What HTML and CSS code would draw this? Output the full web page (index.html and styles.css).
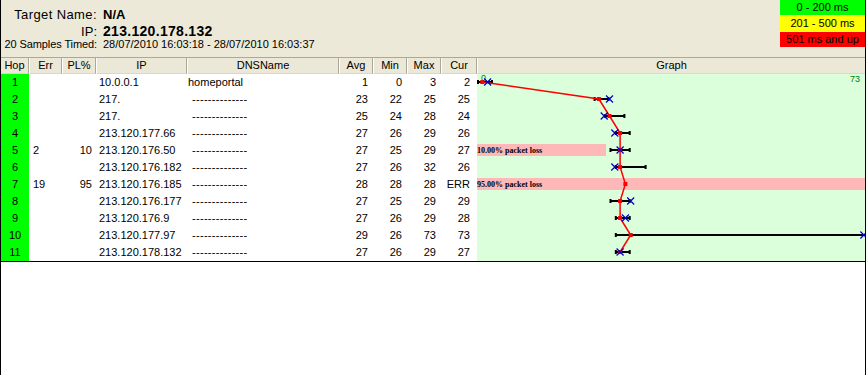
FILE: index.html
```html
<!DOCTYPE html>
<html>
<head>
<meta charset="utf-8">
<link rel="stylesheet" href="styles.css">
</head>
<body>
<div class="window">
  <div class="top">
    <div class="info">
      <div class="line l1"><span class="label wide">Target Name:</span><span class="val bold13">N/A</span></div>
      <div class="line l2"><span class="label">IP:</span><span class="val bold14">213.120.178.132</span></div>
      <div class="line l3"><span class="label small">20 Samples Timed:</span><span class="val small">28/07/2010 16:03:18 - 28/07/2010 16:03:37</span></div>
    </div>
    <div class="legend">
      <div class="lg green">0 - 200 ms</div>
      <div class="lg yellow">201 - 500 ms</div>
      <div class="lg red">501 ms and up</div>
    </div>
  </div>
  <div class="list">
    <div class="th">Hop</div><div class="th">Err</div><div class="th">PL%</div><div class="th">IP</div><div class="th">DNSName</div><div class="th">Avg</div><div class="th">Min</div><div class="th">Max</div><div class="th">Cur</div><div class="th last">Graph</div>

    <div class="graph">
      <svg width="388" height="187" viewBox="0 0 388 187">
        <rect x="0" y="0" width="388" height="187" fill="#dbffdb"/>
        <rect x="0" y="70" width="129" height="12" fill="#ffb8b8"/>
        <rect x="0" y="104" width="388" height="12" fill="#ffb8b8"/>
        <text x="0" y="79" class="pl">10.00% packet loss</text>
        <text x="0" y="113" class="pl">95.00% packet loss</text>
        <text x="4" y="7" class="scale">0</text>
        <text x="383" y="8" class="scale" text-anchor="end">73</text>
        <g stroke="#000" stroke-width="2" fill="none">
          <path d="M0 8H15.9M1 6V10M15 6V10"/>
          <path d="M116.6 25H132.5M117.6 23V27M131.5 23V27"/>
          <path d="M127.2 42H148.4M128.2 40V44M147.4 40V44"/>
          <path d="M137.8 59H153.7M138.8 57V61M152.7 57V61"/>
          <path d="M132.5 76H153.7M133.5 74V78M152.7 74V78"/>
          <path d="M137.8 93H169.6M138.8 91V95M168.6 91V95"/>
          <path d="M132.5 127H153.7M133.5 125V129M152.7 125V129"/>
          <path d="M137.8 144H153.7M138.8 142V146M152.7 142V146"/>
          <path d="M137.8 161H388M138.8 159V163"/>
          <path d="M137.8 178H153.7M138.8 176V180M152.7 176V180"/>
        </g>
        <polyline fill="none" stroke="#ff0000" stroke-width="1.5" points="5.3,8 121.9,25 132.5,42 143.1,59 143.1,76 143.1,93 148.4,110 143.1,127 143.1,144 153.7,161 143.1,178"/>
        <g fill="#ff0000">
          <rect x="3.3" y="6" width="4" height="4"/>
          <rect x="119.9" y="23" width="4" height="4"/>
          <rect x="130.5" y="40" width="4" height="4"/>
          <rect x="141.1" y="57" width="4" height="4"/>
          <rect x="141.1" y="74" width="4" height="4"/>
          <rect x="141.1" y="91" width="4" height="4"/>
          <rect x="146.4" y="108" width="4" height="4"/>
          <rect x="141.1" y="125" width="4" height="4"/>
          <rect x="141.1" y="142" width="4" height="4"/>
          <rect x="151.7" y="159" width="4" height="4"/>
          <rect x="141.1" y="176" width="4" height="4"/>
        </g>
        <g stroke="#0000c8" stroke-width="1.2" fill="none">
          <path d="M7.1 4.5l7 7M14.1 4.5l-7 7"/>
          <path d="M129 21.5l7 7M136 21.5l-7 7"/>
          <path d="M123.7 38.5l7 7M130.7 38.5l-7 7"/>
          <path d="M134.3 55.5l7 7M141.3 55.5l-7 7"/>
          <path d="M139.6 72.5l7 7M146.6 72.5l-7 7"/>
          <path d="M134.3 89.5l7 7M141.3 89.5l-7 7"/>
          <path d="M150.2 123.5l7 7M157.2 123.5l-7 7"/>
          <path d="M144.9 140.5l7 7M151.9 140.5l-7 7"/>
          <path d="M383.4 157.5l7 7M390.4 157.5l-7 7"/>
          <path d="M139.6 174.5l7 7M146.6 174.5l-7 7"/>
        </g>
      </svg>
    </div>

    <div class="hop">1</div><div class="err"></div><div class="pl"></div><div class="ip">10.0.0.1</div><div class="dns">homeportal</div><div class="num">1</div><div class="num">0</div><div class="num">3</div><div class="num cur">2</div>
    <div class="hop">2</div><div class="err"></div><div class="pl"></div><div class="ip">217.</div><div class="dns dash">--------------</div><div class="num">23</div><div class="num">22</div><div class="num">25</div><div class="num cur">25</div>
    <div class="hop">3</div><div class="err"></div><div class="pl"></div><div class="ip">217.</div><div class="dns dash">--------------</div><div class="num">25</div><div class="num">24</div><div class="num">28</div><div class="num cur">24</div>
    <div class="hop">4</div><div class="err"></div><div class="pl"></div><div class="ip">213.120.177.66</div><div class="dns dash">--------------</div><div class="num">27</div><div class="num">26</div><div class="num">29</div><div class="num cur">26</div>
    <div class="hop">5</div><div class="err">2</div><div class="pl">10</div><div class="ip">213.120.176.50</div><div class="dns dash">--------------</div><div class="num">27</div><div class="num">25</div><div class="num">29</div><div class="num cur">27</div>
    <div class="hop">6</div><div class="err"></div><div class="pl"></div><div class="ip">213.120.176.182</div><div class="dns dash">--------------</div><div class="num">27</div><div class="num">26</div><div class="num">32</div><div class="num cur">26</div>
    <div class="hop">7</div><div class="err">19</div><div class="pl">95</div><div class="ip">213.120.176.185</div><div class="dns dash">--------------</div><div class="num">28</div><div class="num">28</div><div class="num">28</div><div class="num cur">ERR</div>
    <div class="hop">8</div><div class="err"></div><div class="pl"></div><div class="ip">213.120.176.177</div><div class="dns dash">--------------</div><div class="num">27</div><div class="num">25</div><div class="num">29</div><div class="num cur">29</div>
    <div class="hop">9</div><div class="err"></div><div class="pl"></div><div class="ip">213.120.176.9</div><div class="dns dash">--------------</div><div class="num">27</div><div class="num">26</div><div class="num">29</div><div class="num cur">28</div>
    <div class="hop">10</div><div class="err"></div><div class="pl"></div><div class="ip">213.120.177.97</div><div class="dns dash">--------------</div><div class="num">29</div><div class="num">26</div><div class="num">73</div><div class="num cur">73</div>
    <div class="hop">11</div><div class="err"></div><div class="pl"></div><div class="ip">213.120.178.132</div><div class="dns dash">--------------</div><div class="num">27</div><div class="num">26</div><div class="num">29</div><div class="num cur">27</div>
  </div>
</div>
</body>
</html>
```
FILE: styles.css
```css
* { box-sizing: border-box; }
html, body { margin: 0; padding: 0; }
body {
  width: 866px;
  height: 375px;
  overflow: hidden;
  background: #fff;
  font-family: "Liberation Sans", Arial, sans-serif;
  font-size: 11px;
  color: #000;
}
.window {
  height: 375px;
  border-left: 1px solid #000;
  border-right: 1px solid #000;
  background: #fff;
}
.top {
  height: 58px;
  background: #ece9d8;
  border-bottom: 1px solid #aca899;
  display: flex;
  justify-content: space-between;
  align-items: flex-start;
}
.info {
  padding-top: 7px;
  display: flex;
  flex-direction: column;
}
.line { display: flex; align-items: baseline; }
.l1 { height: 16px; line-height: 16px; }
.l2 { height: 15px; line-height: 16px; }
.l3 { height: 13px; line-height: 13px; }
.label {
  width: 96px;
  text-align: right;
  font-size: 13px;
}
.label.wide { letter-spacing: 0.4px; }
.label.small { font-size: 11px; letter-spacing: -0.1px; }
.val { margin-left: 6px; }
.val.small { font-size: 11px; }
.bold13 { font-size: 13px; font-weight: bold; }
.bold14 { font-size: 14px; font-weight: bold; letter-spacing: 0.3px; }
.legend {
  width: 85px;
  display: flex;
  flex-direction: column;
  gap: 1px;
}
.lg {
  height: 15px;
  line-height: 15px;
  text-align: center;
  font-size: 11px;
}
.green { background: #00ff00; }
.yellow { background: #ffff00; }
.red { background: #ff0000; }

.list {
  display: grid;
  grid-template-columns: 28px 33px 34px 91px 152px 34px 34px 34px 36px 388px;
  grid-template-rows: 16px repeat(11, 17px);
  border-bottom: 1px solid #000;
  line-height: 17px;
  white-space: nowrap;
}
.th {
  background: #ebe8d7;
  line-height: 15px;
  text-align: center;
  border-right: 1px solid #aca899;
  border-left: 1px solid #fff;
  border-bottom: 1px solid #dcd8c6;
}
.th:first-child { border-left: none; }
.th.last { border-right: none; }
.graph {
  grid-column: 10;
  grid-row: 2 / span 11;
  overflow: hidden;
}
.graph svg { display: block; }
.graph .pl {
  font-family: "Liberation Serif", "Times New Roman", serif;
  font-size: 8px;
  font-weight: bold;
  fill: #000;
}
.graph .scale {
  font-family: "Liberation Sans", Arial, sans-serif;
  font-size: 9px;
  fill: #008000;
}
.hop {
  background: #00ff00;
  text-align: center;
}
.err { padding-left: 4px; }
.pl { text-align: right; padding-right: 4px; }
.ip { padding-left: 3px; }
.dns { padding-left: 1px; }
.dns.dash { padding-left: 5px; letter-spacing: 0.3px; }
.num { text-align: right; padding-right: 5px; }
.num.cur { padding-right: 7px; }
```
